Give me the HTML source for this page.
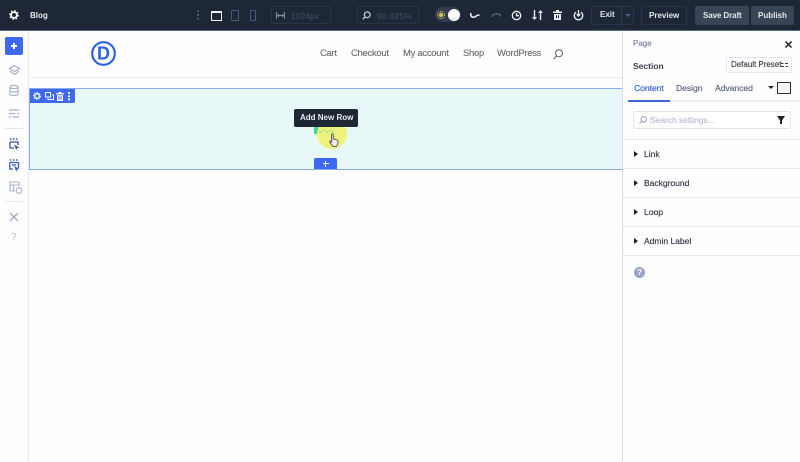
<!DOCTYPE html>
<html><head><meta charset="utf-8"><style>
html,body{margin:0;padding:0;width:800px;height:462px;overflow:hidden;background:#fff;font-family:"Liberation Sans",sans-serif}
#w{position:absolute;left:0;top:0;width:800px;height:462px;overflow:hidden;filter:blur(.3px)}
.a{position:absolute}
.t{position:absolute;white-space:nowrap;line-height:14px}
svg{position:absolute;overflow:visible}
.nav{font-size:9.5px;color:#6d6a6c;top:47px;letter-spacing:-.3px;-webkit-text-stroke:.12px #6d6a6c}
.hr{position:absolute;left:623px;width:177px;height:1px;background:#e6e8f2}
.acc{position:absolute;left:644px;font-size:8.6px;color:#333a47;letter-spacing:-.05px;-webkit-text-stroke:.15px #333a47}
.tri{position:absolute;left:634px;width:0;height:0;border-left:4px solid #222;border-top:3px solid transparent;border-bottom:3px solid transparent}
.b{font-size:8px;font-weight:700;color:#e4e6ea}
</style></head><body><div id="w">
<div class="a" style="left:0;top:0;width:800px;height:462px;background:#fefdff"></div>
<!-- top bar -->
<div class="a" style="left:0;top:0;width:800px;height:30px;background:#1e2735"></div>
<div class="a" style="left:0;top:30px;width:800px;height:1px;background:#5c6a85"></div>
<svg style="left:9px;top:10px" width="10" height="10" viewBox="0 0 10 10"><circle cx="5" cy="5" r="2.9" fill="none" stroke="#fff" stroke-width="1.8"/><circle cx="5" cy="5" r="4.2" fill="none" stroke="#fff" stroke-width="1.3" stroke-dasharray="1.6 1.7"/></svg>
<div class="t b" style="left:30px;top:9px;color:#e8eaee">Blog</div>
<svg style="left:196px;top:10px" width="4" height="10"><circle cx="2" cy="1.2" r="1" fill="#51668c"/><circle cx="2" cy="5" r="1" fill="#51668c"/><circle cx="2" cy="8.8" r="1" fill="#51668c"/></svg>
<div class="a" style="left:211px;top:11px;width:9px;height:7px;border:1.4px solid #f2f3f5;border-top-width:2px"></div>
<div class="a" style="left:231px;top:10px;width:6px;height:9px;border:1.2px solid #46597a;border-radius:1px"></div>
<div class="a" style="left:250px;top:10px;width:4px;height:9px;border:1.2px solid #46597a;border-radius:1px"></div>
<div class="a" style="left:271px;top:6px;width:60px;height:18px;border:1px solid #2a3547;border-radius:2px;box-sizing:border-box"></div>
<svg style="left:276px;top:12px" width="9" height="7" fill="none" stroke="#7d8ba3" stroke-width="1"><path d="M.5 0V7M8.500 0V7M1.500 3.500H7.500"/><path d="M3 2 1.500 3.500 3 5M6 2 7.500 3.500 6 5"/></svg>
<div class="t" style="left:291px;top:9px;font-size:8.500px;color:#43526e">1024px</div>
<div class="a" style="left:357px;top:6px;width:62px;height:18px;border:1px solid #2a3547;border-radius:2px;box-sizing:border-box"></div>
<svg style="left:362px;top:11px" width="9" height="9" fill="none" stroke="#c5cbd6" stroke-width="1.300"><circle cx="5.200" cy="3.800" r="2.900"/><path d="M3 6 .7 8.300"/></svg>
<div class="t" style="left:377px;top:9px;font-size:8.500px;color:#43526e;letter-spacing:.25px">90.825%</div>
<div class="a" style="left:435px;top:7px;width:26px;height:15px;border-radius:8px;background:#2e3b52"></div>
<div class="a" style="left:448px;top:9px;width:12px;height:12px;border-radius:50%;background:#fff"></div>
<svg style="left:437px;top:11px" width="8" height="8"><circle cx="4" cy="4" r="2.200" fill="#d6c34a"/><circle cx="4" cy="4" r="3.600" fill="none" stroke="#d6c34a" stroke-width="1.200" stroke-dasharray="1 1"/></svg>
<svg style="left:470px;top:12px" width="10" height="7" fill="none" stroke="#eef0f3" stroke-width="1.500"><path d="M.8 1V3.500C2 6 5 5.500 6.500 3.800 7.300 3 8.300 3 9.500 3.200"/></svg>
<svg style="left:491px;top:12px" width="10" height="7" fill="none" stroke="#59657a" stroke-width="1.300"><path d="M.5 5C2 1.500 5.500 1.500 8.500 2.500M9 4.500V1.800"/></svg>
<svg style="left:511px;top:10px" width="11" height="11" fill="none" stroke="#f2f3f5" stroke-width="1.300"><circle cx="5.500" cy="5.500" r="4.200"/><path d="M5.500 3V5.700H8"/></svg>
<svg style="left:532px;top:10px" width="11" height="10" fill="#e9ebef"><path d="M1.800 0h1.400v7H5L2.500 10 0 7h1.800zM7.800 10h1.400V3H11L8.500 0 6 3h1.800z"/></svg>
<svg style="left:553px;top:10px" width="9" height="10" fill="#eef0f3"><path d="M3 0h3v1.500h3v1.500H0V1.500h3zM1 4h7v6H1zM3 5.300v3h1v-3zM5 5.300v3h1v-3z"/></svg>
<svg style="left:573px;top:10px" width="11" height="11" fill="none" stroke="#eef0f3" stroke-width="1.300"><path d="M3 2.200A4.200 4.200 0 1 0 8 2.200M5.500 0V5.500"/><path d="M3.800 4.200 5.500 6 7.200 4.200"/></svg>
<div class="a" style="left:591px;top:6px;width:43px;height:19px;border:1px solid #2b3649;border-radius:2px;box-sizing:border-box"></div>
<div class="a" style="left:621px;top:6px;width:1px;height:19px;background:#2b3649"></div>
<div class="t b" style="left:600px;top:8px">Exit</div>
<div class="a" style="left:625px;top:14px;border-top:3px solid #45618f;border-left:3px solid transparent;border-right:3px solid transparent"></div>
<div class="a" style="left:641px;top:6px;width:46px;height:19px;border:1px solid #2b3649;border-radius:2px;box-sizing:border-box"></div>
<div class="t b" style="left:649px;top:9px">Preview</div>
<div class="a" style="left:695px;top:6px;width:54px;height:19px;background:#384557;border-radius:2px"></div>
<div class="t b" style="left:703px;top:9px;letter-spacing:-.1px">Save Draft</div>
<div class="a" style="left:751px;top:6px;width:43px;height:19px;background:#384557;border-radius:2px"></div>
<div class="t b" style="left:758px;top:9px">Publish</div>
<!-- left sidebar -->
<div class="a" style="left:28px;top:31px;width:1px;height:431px;background:#e6e8f2"></div>
<div class="a" style="left:5px;top:37px;width:18px;height:18px;border-radius:2px;background:#3e68f0"></div>
<div class="a" style="left:11px;top:45px;width:6px;height:1.500px;background:#fff"></div>
<div class="a" style="left:13.300px;top:42.800px;width:1.500px;height:6px;background:#fff"></div>
<svg style="left:9px;top:65px" width="11" height="11" fill="none" stroke="#a9b2c9" stroke-width="1.200"><path d="M5.500 .5 10.500 3.500 5.500 6.500 .5 3.500zM1 6 5.500 9.500 10 6"/></svg>
<svg style="left:9px;top:85px" width="10" height="11" fill="none" stroke="#a9b2c9" stroke-width="1.200"><ellipse cx="5" cy="2" rx="4" ry="1.600"/><path d="M1 2V9C1 11 9 11 9 9V2M1 5.500C1 7.300 9 7.300 9 5.500"/></svg>
<svg style="left:9px;top:109px" width="10" height="9" fill="none" stroke="#a9b2c9" stroke-width="1.200"><path d="M0 1H10M0 4.500H6.500M8 4.500H10M0 8H2M3.500 8H10"/></svg>
<div class="a" style="left:5px;top:128px;width:18px;height:1px;background:#e4e6ee"></div>
<svg style="left:9px;top:138px" width="11" height="13" fill="none" stroke="#3a56a8" stroke-width="1.300"><path d="M1 1H2.500M4 1H5.500M7 1H8.500" stroke-width="1.500"/><path d="M1 4H9V7M1 4V10H5"/><path d="M5 6.500 10.500 9.500 8 10 7.500 12.500z" fill="#3a56a8" stroke="none"/></svg>
<svg style="left:9px;top:159px" width="11" height="14" fill="none" stroke="#3b59c0" stroke-width="1.300"><path d="M1 1H2.500M4 1H5.500M7 1H8.500" stroke-width="1.500"/><path d="M.7 3.500H9.500V9M.7 3.500V10H4M3 6H7"/><path d="M5 7 10.500 10 8 10.500 7.500 13z" fill="#3b59c0" stroke="none"/></svg>
<svg style="left:9px;top:181px" width="14" height="13" fill="none" stroke="#a9b2c9" stroke-width="1.100"><path d="M6 10H1V1H10V5M1 4H10M4.500 4V10"/><circle cx="10" cy="9.500" r="2.800"/></svg>
<div class="a" style="left:5px;top:201px;width:18px;height:1px;background:#e4e6ee"></div>
<svg style="left:9px;top:212px" width="10" height="10" fill="none" stroke="#a0a9c0" stroke-width="1.300"><path d="M1 1 9 9M9 1 1 9"/></svg>
<div class="t" style="left:11px;top:231px;font-size:10px;color:#b0b7cb">?</div>
<!-- site header -->
<svg style="left:91px;top:41px" width="25" height="25"><circle cx="12.500" cy="12.500" r="11.300" fill="none" stroke="#2f63dd" stroke-width="2.200"/><text x="12.500" y="18.500" text-anchor="middle" font-family="Liberation Sans" font-size="18" font-weight="700" fill="#2f63dd">D</text></svg>
<div class="t nav" style="left:320px">Cart</div>
<div class="t nav" style="left:351px">Checkout</div>
<div class="t nav" style="left:403px">My account</div>
<div class="t nav" style="left:463px">Shop</div>
<div class="t nav" style="left:497px">WordPress</div>
<svg style="left:553px;top:49px" width="10" height="11" fill="none" stroke="#5f5f64" stroke-width="1"><circle cx="6" cy="4.200" r="3.500"/><path d="M3.500 7 .7 10"/></svg>
<div class="a" style="left:29px;top:77px;width:594px;height:1px;background:#eeeef1"></div>
<!-- section -->
<div class="a" style="left:29px;top:88px;width:594px;height:82px;box-sizing:border-box;background:#e8f7f8;border:1px solid #8aa9ee"></div>
<div class="a" style="left:30px;top:89px;width:45px;height:14px;background:#3e68f0;border-radius:0 0 2px 0"></div>
<svg style="left:33px;top:92px" width="8" height="8"><circle cx="4" cy="4" r="2.300" fill="none" stroke="#fff" stroke-width="1.300"/><circle cx="4" cy="4" r="3.500" fill="none" stroke="#fff" stroke-width="1" stroke-dasharray="1.200 1.500"/></svg>
<svg style="left:45px;top:92px" width="9" height="8" fill="none" stroke="#fff" stroke-width="1"><rect x=".5" y=".5" width="5" height="4.500"/><path d="M7 3H8.500V7.500H3V6"/></svg>
<svg style="left:56px;top:91.500px" width="8" height="9" fill="#fff"><path d="M2.500 0h3v1.200H8v1.200H0V1.200h2.500zM1 3.200h6V9H1zM2.500 4.300v3.500h1V4.300zM4.500 4.300v3.500h1V4.300z"/></svg>
<svg style="left:67px;top:92px" width="4" height="9"><circle cx="2" cy="1" r="1.100" fill="#fff"/><circle cx="2" cy="4.200" r="1.100" fill="#fff"/><circle cx="2" cy="7.400" r="1.100" fill="#fff"/></svg>
<div class="a" style="left:314px;top:127px;width:6px;height:7px;background:#3fd8a3"></div>
<div class="a" style="left:317px;top:119px;width:30px;height:30px;border-radius:50%;background:#eef27a"></div>
<div class="a" style="left:294px;top:109px;width:64px;height:18px;background:#1f2735;border-radius:2px"></div>
<div class="t b" style="left:300px;top:111px;color:#e9ebef">Add New Row</div>
<svg style="left:320px;top:129px" width="20" height="6"><g fill="#5fd9a5"><circle cx="1" cy="3" r=".8"/><circle cx="4" cy="1.500" r=".8"/><circle cx="7" cy="3" r=".8"/><circle cx="10" cy="1.500" r=".8"/><circle cx="13" cy="3" r=".8"/></g></svg>
<svg style="left:329px;top:133px" width="10" height="14"><path d="M2.500 1.200C3.300.5 4.200 1 4.300 1.800V6L7.500 6.800C8.800 7.200 9.200 8 9 9.300L8.300 12C8 13 7.300 13.500 6.500 13.500H5C4 13.500 3.500 13 3 12.300L.7 9.200C.2 8.300 1.300 7.500 2 8.200L2.700 9z" fill="#efefec" stroke="#5a5a60" stroke-width="1"/></svg>
<div class="a" style="left:314px;top:158px;width:23px;height:11px;background:#3e68f0;border-radius:2px 2px 0 0"></div>
<div class="a" style="left:323px;top:163px;width:5.500px;height:1.300px;background:#fff"></div>
<div class="a" style="left:325.100px;top:161px;width:1.300px;height:5.500px;background:#fff"></div>
<!-- right panel -->
<div class="a" style="left:622px;top:31px;width:178px;height:431px;background:#fefdff"></div>
<div class="a" style="left:622px;top:31px;width:1px;height:431px;background:#d9dce8"></div>
<div class="t" style="left:633px;top:37px;font-size:8px;color:#6f7c94;-webkit-text-stroke:.1px #6f7c94">Page</div>
<svg style="left:785px;top:41px" width="7" height="7" fill="none" stroke="#1d1f24" stroke-width="1.500"><path d="M.5 .5 6.500 6.500M6.500 .5 .5 6.500"/></svg>
<div class="t" style="left:633px;top:59px;font-size:8.500px;font-weight:700;color:#3a3f49">Section</div>
<div class="a" style="left:726px;top:57px;width:66px;height:16px;box-sizing:border-box;border:1px solid #e5e7f0;border-radius:2px;background:#fff"></div>
<div class="t" style="left:731px;top:58px;font-size:8px;color:#3a3f49;letter-spacing:-.02px;-webkit-text-stroke:.15px #3a3f49">Default Preset</div>
<svg style="left:781px;top:62px" width="7" height="6" fill="none" stroke="#3a3f49" stroke-width="1"><path d="M0 1.500H2.500M4 1.500H7M0 4.500H3M4.500 4.500H7"/></svg>
<div class="t" style="left:634px;top:81px;font-size:8.700px;color:#3f66d6;letter-spacing:-.1px;-webkit-text-stroke:.2px #3f66d6">Content</div>
<div class="t" style="left:676px;top:81px;font-size:8.700px;color:#5a667b;letter-spacing:-.1px;-webkit-text-stroke:.15px #5a667b">Design</div>
<div class="t" style="left:715px;top:81px;font-size:8.700px;color:#5a667b;letter-spacing:-.1px;-webkit-text-stroke:.15px #5a667b">Advanced</div>
<div class="a" style="left:768px;top:86px;border-top:3.500px solid #222;border-left:3px solid transparent;border-right:3px solid transparent"></div>
<div class="a" style="left:777px;top:82px;width:12px;height:10px;border:1px solid #333"></div>
<div class="a" style="left:628px;top:100px;width:172px;height:2px;background:#eceef5"></div>
<div class="a" style="left:628px;top:100px;width:42px;height:2px;background:#3f66d6"></div>
<div class="a" style="left:633px;top:111px;width:158px;height:18px;box-sizing:border-box;border:1px solid #e3e5ef;border-radius:2px;background:#fff"></div>
<svg style="left:639px;top:116px" width="8" height="8" fill="none" stroke="#98a3bb" stroke-width="1"><circle cx="4.700" cy="3.300" r="2.700"/><path d="M2.700 5.300 .5 7.500"/></svg>
<div class="t" style="left:650px;top:113px;font-size:8.700px;color:#aab2c6;letter-spacing:-.15px">Search settings...</div>
<div class="a" style="left:777px;top:116px;border-top:6px solid #222;border-left:4px solid transparent;border-right:4px solid transparent"></div>
<div class="a" style="left:780.300px;top:118px;width:1.500px;height:6px;background:#222"></div>
<div class="hr" style="top:139px"></div>
<div class="tri" style="top:151px"></div>
<div class="t acc" style="top:147px">Link</div>
<div class="hr" style="top:168px"></div>
<div class="tri" style="top:180px"></div>
<div class="t acc" style="top:176px">Background</div>
<div class="hr" style="top:197px"></div>
<div class="tri" style="top:209px"></div>
<div class="t acc" style="top:205px">Loop</div>
<div class="hr" style="top:226px"></div>
<div class="tri" style="top:238px"></div>
<div class="t acc" style="top:234px">Admin Label</div>
<div class="hr" style="top:255px"></div>
<div class="a" style="left:634px;top:267px;width:11px;height:11px;border-radius:50%;background:#9aa3c2;color:#fff;font-size:8.500px;font-weight:700;text-align:center;line-height:11px">?</div>
</div></body></html>
